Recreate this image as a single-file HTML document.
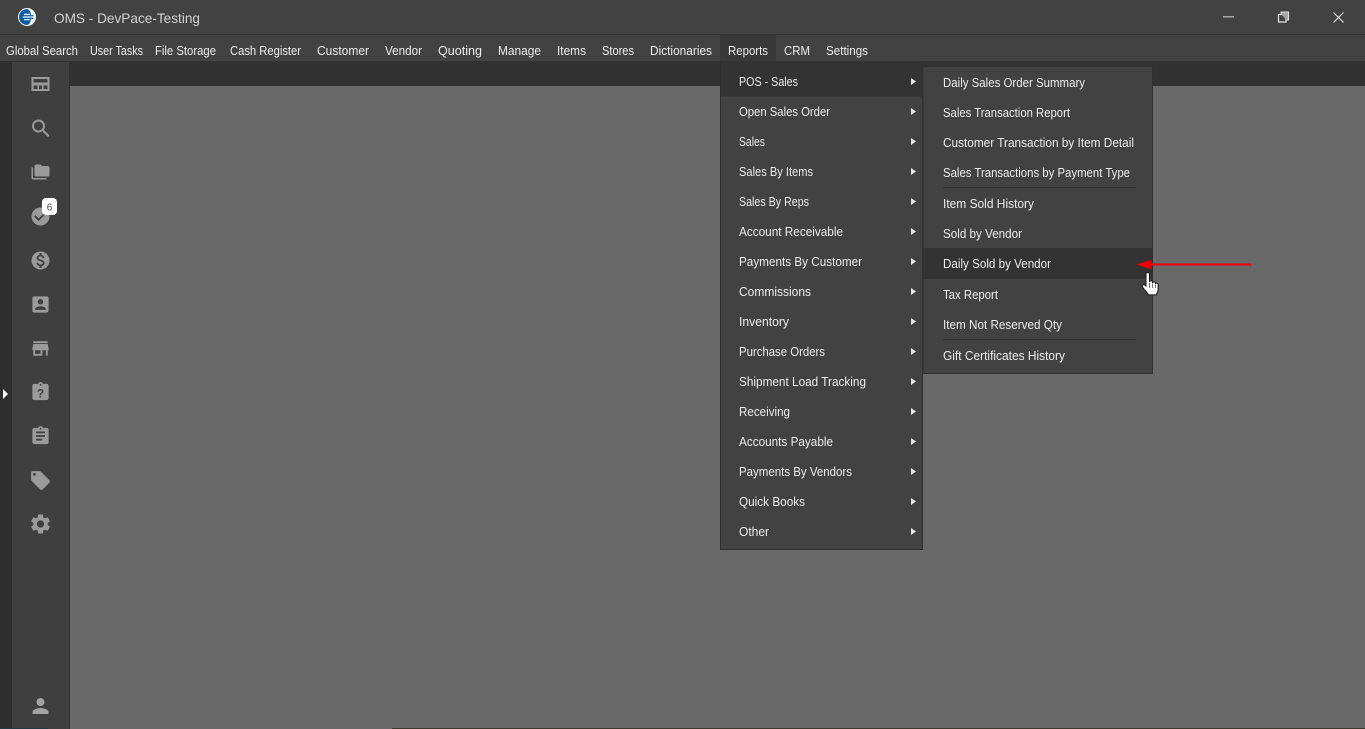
<!DOCTYPE html>
<html lang="en">
<head>
<meta charset="utf-8">
<title>OMS - DevPace-Testing</title>
<style>
html,body{margin:0;padding:0;width:1365px;height:729px;overflow:hidden;background:#424242}
svg{position:absolute;left:0;top:0;display:block}
text{font-family:"Liberation Sans",sans-serif;font-size:12.5px;fill:#ececec}
.ic{fill:#9a9a9a}
</style>
</head>
<body>
<svg width="1365" height="729" viewBox="0 0 1365 729" xmlns="http://www.w3.org/2000/svg">
<!-- frame -->
<rect x="0" y="0" width="1365" height="729" fill="#424242"/>
<rect x="0" y="34" width="1365" height="1" fill="#353535"/>
<rect x="0" y="61" width="1365" height="25" fill="#323232"/>
<rect x="0" y="61" width="12" height="668" fill="#2e2e2e"/>
<rect x="12" y="62" width="57" height="667" fill="#3f3f3f"/>
<rect x="69" y="62" width="1" height="667" fill="#303030"/>
<rect x="70" y="86" width="1295" height="643" fill="#696969"/>
<rect x="0" y="728" width="48" height="1" fill="#1f3a44"/>
<rect x="392" y="728" width="973" height="1" fill="#3a3a2c"/>

<!-- title bar -->
<circle cx="27" cy="17" r="9" fill="#f6f6f6"/>
<path d="M27 9a8 8 0 0 0 0 16c2.500-.6 4-2.500 4-8s-1.500-7.400-4-8z" fill="#0b5ea6"/>
<path d="M24 13.800h6v1.300h-6zM23 16.400h8v1.300h-8zM24 19h6v1.300h-6z" fill="#e8f0f6"/>
<path d="M30 15.100h3.500v1.300H30zM30 17.700h3.500V19H30z" fill="#0b5ea6"/>
<text x="54" y="23" style="font-size:14px;fill:#d2d2d2" textLength="146" lengthAdjust="spacingAndGlyphs">OMS - DevPace-Testing</text>
<rect x="1223" y="16" width="11" height="1.500" fill="#a8a8a8"/>
<path d="M1278.500 14.500h7.500v7.500h-7.500z" fill="none" stroke="#e4e4e4" stroke-width="1.200"/>
<path d="M1281 14v-2h7.500v8h-2.300z" fill="#a5a5a5"/>
<path d="M1281 14v-2h7.500v8h-2" fill="none" stroke="#e4e4e4" stroke-width="1"/>
<path d="M1333.500 12.500l10 10M1343.500 12.500l-10 10" fill="none" stroke="#dcdcdc" stroke-width="1.200"/>

<!-- menu bar -->
<rect x="720" y="35" width="56" height="26" fill="#383838"/>
<g>
<text x="6" y="55" textLength="72" lengthAdjust="spacingAndGlyphs">Global Search</text>
<text x="90" y="55" textLength="53" lengthAdjust="spacingAndGlyphs">User Tasks</text>
<text x="155" y="55" textLength="61" lengthAdjust="spacingAndGlyphs">File Storage</text>
<text x="230" y="55" textLength="71" lengthAdjust="spacingAndGlyphs">Cash Register</text>
<text x="317" y="55" textLength="52" lengthAdjust="spacingAndGlyphs">Customer</text>
<text x="385" y="55" textLength="37" lengthAdjust="spacingAndGlyphs">Vendor</text>
<text x="438" y="55" textLength="44" lengthAdjust="spacingAndGlyphs">Quoting</text>
<text x="498" y="55" textLength="43" lengthAdjust="spacingAndGlyphs">Manage</text>
<text x="557" y="55" textLength="29" lengthAdjust="spacingAndGlyphs">Items</text>
<text x="602" y="55" textLength="32" lengthAdjust="spacingAndGlyphs">Stores</text>
<text x="650" y="55" textLength="62" lengthAdjust="spacingAndGlyphs">Dictionaries</text>
<text x="728" y="55" textLength="40" lengthAdjust="spacingAndGlyphs">Reports</text>
<text x="784" y="55" textLength="26" lengthAdjust="spacingAndGlyphs">CRM</text>
<text x="826" y="55" textLength="42" lengthAdjust="spacingAndGlyphs">Settings</text>
</g>

<!-- sidebar -->
<path d="M3 389l5 5-5 5z" fill="#fff"/>
<path class="ic" fill-rule="evenodd" d="M31.500 77h18v14h-18zM33.500 79v3.500h14V79zM33.500 85.500V89h4v-3.500zM39 85.500V89h3v-3.500zM43.500 85.500V89h4v-3.500z"/>
<path class="ic" transform="translate(29 116.500)" d="M15.500 14h-.79l-.28-.27C15.410 12.590 16 11.110 16 9.500 16 5.910 13.090 3 9.500 3S3 5.910 3 9.500 5.910 16 9.500 16c1.610 0 3.090-.59 4.230-1.570l.27.28v.79l5 4.990L20.490 19l-4.990-5zm-6 0C7.010 14 5 11.990 5 9.500S7.010 5 9.500 5 14 7.010 14 9.500 11.990 14 9.500 14z"/>
<path class="ic" transform="translate(31.500 163) scale(.75)" d="M2 6H0v5h.01L0 20c0 1.100.9 2 2 2h18v-2H2V6zm20-2h-8l-2-2H6c-1.100 0-1.990.9-1.990 2L4 16c0 1.100.9 2 2 2h16c1.100 0 2-.9 2-2V6c0-1.100-.9-2-2-2z"/>
<path class="ic" transform="translate(29.700 205.700) scale(.9)" d="M12 2C6.480 2 2 6.480 2 12s4.480 10 10 10 10-4.480 10-10S17.520 2 12 2zm-2 15l-5-5 1.410-1.410L10 14.170l7.590-7.590L19 8l-9 9z"/>
<rect x="42" y="198" width="15" height="17" rx="4" fill="#fff"/>
<text x="49.500" y="210.500" text-anchor="middle" style="font-size:10px;fill:#444">6</text>
<path class="ic" transform="translate(29.700 249.700) scale(.9)" d="M12 2C6.480 2 2 6.480 2 12s4.480 10 10 10 10-4.480 10-10S17.520 2 12 2zm1.410 16.090V20h-2.670v-1.930c-1.710-.36-3.160-1.460-3.270-3.400h1.960c.1 1.050.82 1.870 2.650 1.870 1.960 0 2.400-.98 2.400-1.590 0-.83-.44-1.610-2.670-2.140-2.480-.6-4.180-1.620-4.180-3.670 0-1.720 1.390-2.840 3.110-3.210V4h2.670v1.950c1.860.45 2.790 1.860 2.870 3.390H14.300c-.05-1.110-.64-1.870-2.220-1.870-1.500 0-2.400.68-2.400 1.640 0 .84.65 1.390 2.670 1.910s4.180 1.390 4.180 3.910c-.01 1.830-1.380 2.830-3.120 3.160z"/>
<path class="ic" transform="translate(29.700 293.700) scale(.9)" d="M3 5v14c0 1.100.89 2 2 2h14c1.100 0 2-.9 2-2V5c0-1.100-.9-2-2-2H5c-1.110 0-2 .9-2 2zm12 4c0 1.660-1.340 3-3 3s-3-1.340-3-3 1.340-3 3-3 3 1.340 3 3zm-9 8c0-2 4-3.100 6-3.100s6 1.100 6 3.100v1H6v-1z"/>
<path class="ic" transform="translate(29.700 337.700) scale(.9)" d="M20 4H4v2h16V4zm1 10v-2l-1-5H4l-1 5v2h1v6h10v-6h4v6h2v-6h1zm-9 4H6v-4h6v4z"/>
<path class="ic" transform="translate(29.700 381.200) scale(.9)" d="M19 3h-4.180C14.400 1.840 13.300 1 12 1c-1.300 0-2.400.84-2.820 2H5c-1.100 0-2 .9-2 2v14c0 1.100.9 2 2 2h14c1.100 0 2-.9 2-2V5c0-1.100-.9-2-2-2zm-7 0c.55 0 1 .45 1 1s-.45 1-1 1-1-.45-1-1 .45-1 1-1z"/>
<text x="40.500" y="397.500" text-anchor="middle" style="font-size:12px;font-weight:bold;fill:#3f3f3f">?</text>
<path class="ic" transform="translate(29.700 425.200) scale(.9)" d="M19 3h-4.180C14.400 1.840 13.300 1 12 1c-1.300 0-2.400.84-2.820 2H5c-1.100 0-2 .9-2 2v14c0 1.100.9 2 2 2h14c1.100 0 2-.9 2-2V5c0-1.100-.9-2-2-2zm-7 0c.55 0 1 .45 1 1s-.45 1-1 1-1-.45-1-1 .45-1 1-1zm2 14H7v-2h7v2zm3-4H7v-2h10v2zm0-4H7V7h10v2z"/>
<path class="ic" transform="translate(29.200 469.200) scale(.94)" d="M21.410 11.580l-9-9C12.050 2.220 11.550 2 11 2H4c-1.100 0-2 .9-2 2v7c0 .55.22 1.050.59 1.420l9 9c.36.36.86.58 1.410.58.55 0 1.050-.22 1.410-.59l7-7c.37-.36.59-.86.59-1.410 0-.55-.23-1.060-.59-1.420zM5.500 7C4.670 7 4 6.330 4 5.500S4.670 4 5.500 4 7 4.670 7 5.500 6.330 7 5.500 7z"/>
<path class="ic" transform="translate(28.500 512) " d="M19.140 12.940c.04-.3.06-.61.06-.94 0-.32-.02-.64-.07-.94l2.030-1.580c.18-.14.23-.41.12-.61l-1.920-3.320c-.12-.22-.37-.29-.59-.22l-2.390.96c-.5-.38-1.030-.7-1.620-.94l-.36-2.540c-.04-.24-.24-.41-.48-.41h-3.840c-.24 0-.43.17-.47.41l-.36 2.540c-.59.24-1.130.57-1.620.94l-2.390-.96c-.22-.08-.47 0-.59.22L2.740 8.870c-.12.21-.08.47.12.61l2.030 1.580c-.05.3-.09.63-.09.94s.02.64.07.94l-2.030 1.580c-.18.14-.23.41-.12.61l1.920 3.320c.12.22.37.29.59.22l2.390-.96c.5.38 1.030.7 1.620.94l.36 2.540c.05.24.24.41.48.41h3.840c.24 0 .44-.17.47-.41l.36-2.540c.59-.24 1.130-.56 1.620-.94l2.390.96c.22.08.47 0 .59-.22l1.920-3.320c.12-.22.07-.47-.12-.61l-2.010-1.580zM12 15.600c-1.980 0-3.600-1.620-3.600-3.600s1.620-3.600 3.600-3.600 3.600 1.620 3.600 3.600-1.620 3.600-3.600 3.600z"/>
<path transform="translate(28.500 694)" fill="#a2a2a2" d="M12 12c2.210 0 4-1.790 4-4s-1.790-4-4-4-4 1.790-4 4 1.790 4 4 4zm0 2c-2.670 0-8 1.340-8 4v2h16v-2c0-2.660-5.330-4-8-4z"/>

<!-- main dropdown -->
<rect x="720" y="61" width="203" height="489" fill="#2f2f2f"/>
<rect x="721" y="61" width="201" height="488" fill="#424242"/>
<rect x="721" y="61" width="201.500" height="35.500" fill="#333333"/>
<g>
<text x="739" y="86" textLength="59" lengthAdjust="spacingAndGlyphs">POS - Sales</text>
<text x="739" y="116" textLength="91" lengthAdjust="spacingAndGlyphs">Open Sales Order</text>
<text x="739" y="146" textLength="26" lengthAdjust="spacingAndGlyphs">Sales</text>
<text x="739" y="176" textLength="74" lengthAdjust="spacingAndGlyphs">Sales By Items</text>
<text x="739" y="206" textLength="70" lengthAdjust="spacingAndGlyphs">Sales By Reps</text>
<text x="739" y="236" textLength="104" lengthAdjust="spacingAndGlyphs">Account Receivable</text>
<text x="739" y="266" textLength="123" lengthAdjust="spacingAndGlyphs">Payments By Customer</text>
<text x="739" y="296" textLength="72" lengthAdjust="spacingAndGlyphs">Commissions</text>
<text x="739" y="326" textLength="50" lengthAdjust="spacingAndGlyphs">Inventory</text>
<text x="739" y="356" textLength="86" lengthAdjust="spacingAndGlyphs">Purchase Orders</text>
<text x="739" y="386" textLength="127" lengthAdjust="spacingAndGlyphs">Shipment Load Tracking</text>
<text x="739" y="416" textLength="51" lengthAdjust="spacingAndGlyphs">Receiving</text>
<text x="739" y="446" textLength="94" lengthAdjust="spacingAndGlyphs">Accounts Payable</text>
<text x="739" y="476" textLength="113" lengthAdjust="spacingAndGlyphs">Payments By Vendors</text>
<text x="739" y="506" textLength="66" lengthAdjust="spacingAndGlyphs">Quick Books</text>
<text x="739" y="536" textLength="30" lengthAdjust="spacingAndGlyphs">Other</text>
</g>
<path fill="#e6e6e6" d="M911 78l5 3.500-5 3.500zM911 108l5 3.500-5 3.500zM911 138l5 3.500-5 3.500zM911 168l5 3.500-5 3.500zM911 198l5 3.500-5 3.500zM911 228l5 3.500-5 3.500zM911 258l5 3.500-5 3.500zM911 288l5 3.500-5 3.500zM911 318l5 3.500-5 3.500zM911 348l5 3.500-5 3.500zM911 378l5 3.500-5 3.500zM911 408l5 3.500-5 3.500zM911 438l5 3.500-5 3.500zM911 468l5 3.500-5 3.500zM911 498l5 3.500-5 3.500zM911 528l5 3.500-5 3.500z"/>

<!-- sub dropdown -->
<rect x="922.500" y="67" width="230.500" height="307" fill="#303030"/>
<rect x="923.500" y="67" width="228.500" height="306" fill="#424242"/>
<rect x="923.500" y="248" width="228.500" height="31" fill="#333333"/>
<rect x="943" y="187" width="193" height="1" fill="#2e2e2e"/>
<rect x="943" y="339" width="193" height="1" fill="#2e2e2e"/>
<g>
<text x="943" y="87" textLength="142" lengthAdjust="spacingAndGlyphs">Daily Sales Order Summary</text>
<text x="943" y="117" textLength="127" lengthAdjust="spacingAndGlyphs">Sales Transaction Report</text>
<text x="943" y="147" textLength="191" lengthAdjust="spacingAndGlyphs">Customer Transaction by Item Detail</text>
<text x="943" y="177" textLength="187" lengthAdjust="spacingAndGlyphs">Sales Transactions by Payment Type</text>
<text x="943" y="208" textLength="91" lengthAdjust="spacingAndGlyphs">Item Sold History</text>
<text x="943" y="238" textLength="79" lengthAdjust="spacingAndGlyphs">Sold by Vendor</text>
<text x="943" y="268" textLength="108" lengthAdjust="spacingAndGlyphs">Daily Sold by Vendor</text>
<text x="943" y="299" textLength="55" lengthAdjust="spacingAndGlyphs">Tax Report</text>
<text x="943" y="329" textLength="119" lengthAdjust="spacingAndGlyphs">Item Not Reserved Qty</text>
<text x="943" y="360" textLength="122" lengthAdjust="spacingAndGlyphs">Gift Certificates History</text>
</g>

<!-- annotation arrow -->
<path fill="#f00000" d="M1136 264.500l15-4.500v3.500h100v2h-100v3.500z"/>
<!-- hand cursor -->
<path fill="#fff" stroke="#1a1a1a" stroke-width="1" stroke-linejoin="round" d="M1146 274.500c0-2.600 3.500-2.600 3.500 0v7.500c.3-1.600 3-1.600 3 0v1c.3-1.500 2.800-1.500 3 0v1c.4-1.300 2.600-1 2.600.6v5.400c0 2-1.200 3-2 4.900h-7.600c-1-2.200-4-5-6-7.800-1.100-1.900 1-3.300 2.500-1.800l1 1z"/>
<path stroke="#555" stroke-width=".8" d="M1149.500 283v5M1152.500 284v4M1155.500 285v3" fill="none"/>
</svg>
</body>
</html>
